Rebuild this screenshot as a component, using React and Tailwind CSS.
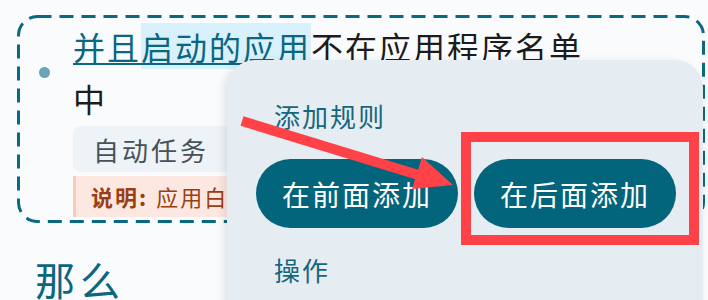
import React from "react";

const font = { fontFamily: '"Noto Sans CJK SC", "Noto Sans", sans-serif' };

const App = () => {
  return (
    <div
      className="relative w-[708px] h-[300px] overflow-hidden bg-[#f9fbfd]"
      style={font}
    >
      {/* rule card */}
      <div className="pl-[17px] pt-[15px]">
        <div className="relative w-[688px] h-[208px] p-[3px] pt-[5px]">
          <svg
            className="absolute left-0 top-0 pointer-events-none"
            width="688"
            height="208"
            viewBox="0 0 688 208"
          >
            <rect
              x="1.5"
              y="1.5"
              width="685"
              height="205"
              rx="19"
              fill="none"
              stroke="#0b6882"
              strokeWidth="3"
              strokeDasharray="14 8"
            />
          </svg>
          <div className="flex items-center">
            <span className="ml-[19px] w-[11px] h-[11px] rounded-full bg-[#6aa4b7] shrink-0" />
            <p className="ml-[23px] w-[520px] text-[32px] leading-[52px] tracking-[2px] text-[#1c1c1c]">
              <span className="text-[#0b6680] underline decoration-2 underline-offset-[3px]">
                并且
                <span className="bg-[#d8f1fc]">启动的应用</span>
              </span>
              不在应用程序名单中
            </p>
          </div>
          <div className="ml-[53px] mr-[16px] mt-[2px]">
            <div className="h-[46px] rounded-[8px] bg-[#edf3f7] pl-[20px] flex items-center text-[26px] tracking-[3px] text-[#485157]">
              自动任务
            </div>
            <div className="mt-[4px] h-[41px] border-l-[3px] border-[#fcc8b7] bg-[#fde8e1] pl-[15px] flex items-center whitespace-nowrap overflow-hidden text-[22px] tracking-[2px] text-[#9a3f12]">
              <span className="font-bold">说明:</span>
              <span className="ml-[8px]">应用白名单中的应用不会触发此规则</span>
            </div>
          </div>
        </div>
      </div>

      <div className="pl-[35px] pt-[28px] text-[40px] leading-[56px] tracking-[5px] text-[#0b6680]">
        那么
      </div>

      {/* bottom sheet menu */}
      <div className="absolute left-[227px] top-[60px] w-[476px] h-[280px] rounded-[28px] bg-[#e5edf3] shadow-[-3px_2px_10px_rgba(0,0,0,0.10)] pt-[38px]">
        <div className="pl-[47px] text-[26px] leading-[36px] tracking-[2px] text-[#17667c]">
          添加规则
        </div>
        <div className="flex gap-[16px] pl-[29px] mt-[25px]">
          <button className="w-[202px] h-[69px] rounded-full bg-[#03657b] text-white text-[28px] tracking-[2px] flex items-center justify-center">
            在前面添加
          </button>
          <button className="w-[202px] h-[69px] rounded-full bg-[#03657b] text-white text-[28px] tracking-[2px] flex items-center justify-center">
            在后面添加
          </button>
        </div>
        <div className="pl-[47px] mt-[24px] text-[26px] leading-[36px] tracking-[2px] text-[#17667c]">
          操作
        </div>
      </div>

      {/* annotation */}
      <div className="absolute left-[461px] top-[132px] w-[238px] h-[113px] border-[10px] border-[#ff4148]" />
      <svg
        className="absolute left-0 top-0 pointer-events-none"
        width="708"
        height="300"
        viewBox="0 0 708 300"
      >
        <line x1="242" y1="121" x2="425" y2="177" stroke="#ff4148" strokeWidth="10" />
        <polygon points="453,185 422,157 412,189" fill="#ff4148" />
      </svg>
    </div>
  );
};

export default App;
